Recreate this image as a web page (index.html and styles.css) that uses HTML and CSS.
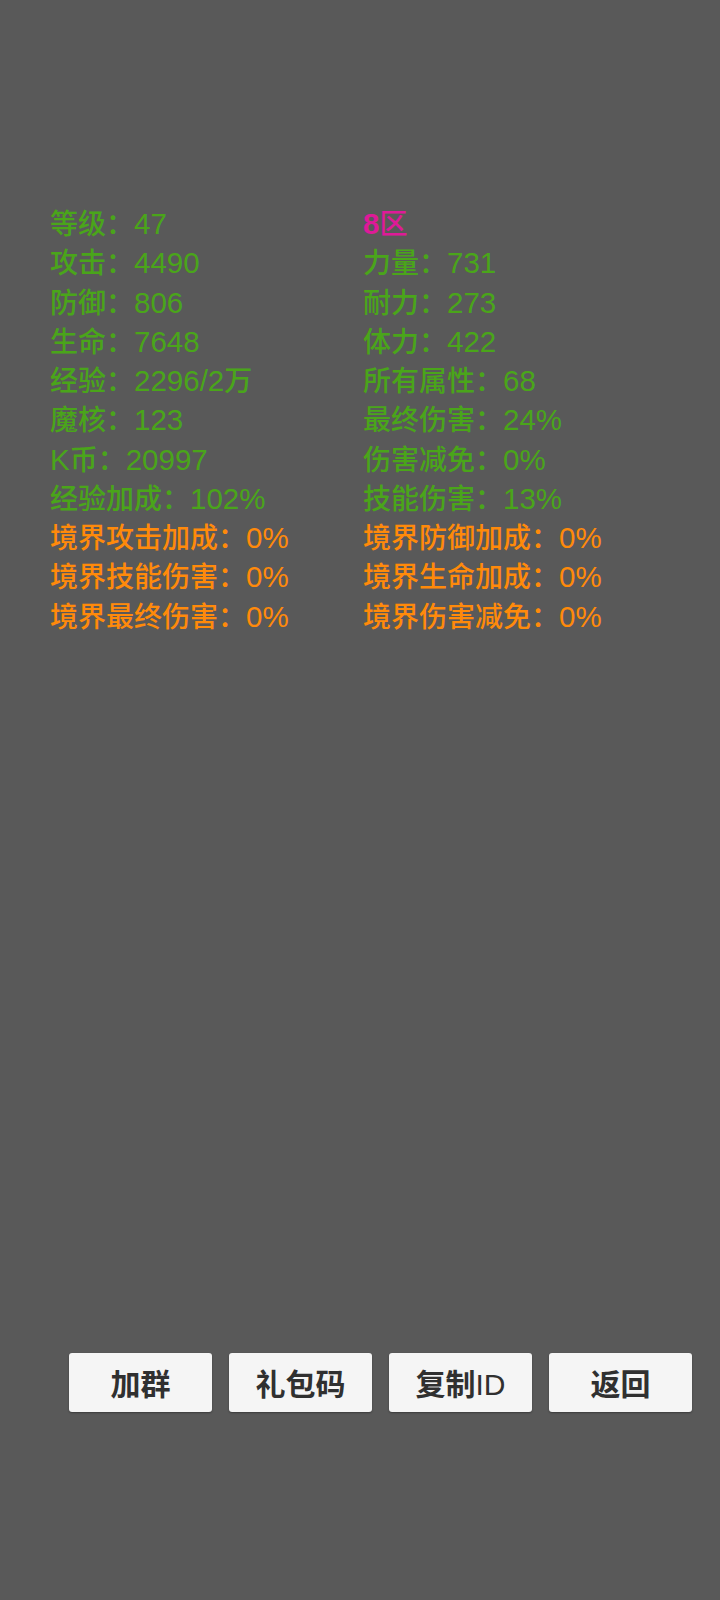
FILE: index.html
```html
<!DOCTYPE html>
<html lang="zh-CN">
<head>
<meta charset="utf-8">
<title>角色属性</title>
<link rel="stylesheet" href="styles.css">
</head>
<body>
<div class="page">
  <div class="stats">
    <div class="stat green"><span class="label">等级：</span><span class="value">47</span></div>
    <div class="stat zone"><span class="value">8</span><span class="label">区</span></div>
    <div class="stat green"><span class="label">攻击：</span><span class="value">4490</span></div>
    <div class="stat green"><span class="label">力量：</span><span class="value">731</span></div>
    <div class="stat green"><span class="label">防御：</span><span class="value">806</span></div>
    <div class="stat green"><span class="label">耐力：</span><span class="value">273</span></div>
    <div class="stat green"><span class="label">生命：</span><span class="value">7648</span></div>
    <div class="stat green"><span class="label">体力：</span><span class="value">422</span></div>
    <div class="stat green"><span class="label">经验：</span><span class="value">2296/2</span><span class="label">万</span></div>
    <div class="stat green"><span class="label">所有属性：</span><span class="value">68</span></div>
    <div class="stat green"><span class="label">魔核：</span><span class="value">123</span></div>
    <div class="stat green"><span class="label">最终伤害：</span><span class="value">24%</span></div>
    <div class="stat green"><span class="value">K</span><span class="label">币：</span><span class="value">20997</span></div>
    <div class="stat green"><span class="label">伤害减免：</span><span class="value">0%</span></div>
    <div class="stat green"><span class="label">经验加成：</span><span class="value">102%</span></div>
    <div class="stat green"><span class="label">技能伤害：</span><span class="value">13%</span></div>
    <div class="stat orange"><span class="label">境界攻击加成：</span><span class="value">0%</span></div>
    <div class="stat orange"><span class="label">境界防御加成：</span><span class="value">0%</span></div>
    <div class="stat orange"><span class="label">境界技能伤害：</span><span class="value">0%</span></div>
    <div class="stat orange"><span class="label">境界生命加成：</span><span class="value">0%</span></div>
    <div class="stat orange"><span class="label">境界最终伤害：</span><span class="value">0%</span></div>
    <div class="stat orange"><span class="label">境界伤害减免：</span><span class="value">0%</span></div>
  </div>
  <div class="actions">
    <button class="btn">加群</button>
    <button class="btn">礼包码</button>
    <button class="btn">复制<span class="btn-latin">ID</span></button>
    <button class="btn">返回</button>
  </div>
</div>
</body>
</html>
```

FILE: styles.css
```css
html, body {
  margin: 0;
  padding: 0;
  background: #595959;
}

.page {
  width: 720px;
  height: 1600px;
  display: flex;
  flex-direction: column;
  font-family: "Noto Sans CJK SC", "Noto Sans", sans-serif;
}

.stats {
  padding-top: 203px;
  padding-left: 50px;
  display: grid;
  grid-template-columns: 313px 1fr;
  grid-auto-rows: 39.25px;
}

.stat {
  font-size: 28px;
  line-height: 39.25px;
  white-space: nowrap;
}

.label {
  font-family: "Noto Sans CJK SC", sans-serif;
  font-size: 28px;
  font-weight: 500;
}

.value {
  font-family: "Liberation Sans", Arial, sans-serif;
  font-size: 29.5px;
}

.green {
  color: #4aa51a;
}

.orange {
  color: #ff8a0a;
}

.zone {
  color: #de1a98;
}

.zone .value {
  font-weight: 700;
}

.actions {
  margin-top: 718px;
  padding-left: 69px;
  display: flex;
  gap: 17px;
}

.btn {
  width: 143px;
  height: 59px;
  margin: 0;
  padding: 0;
  border: none;
  border-radius: 3px;
  background: #f5f5f5;
  box-shadow: 0 1px 2px rgba(0, 0, 0, 0.35);
  color: #303030;
  font-family: "Noto Sans CJK SC", "Noto Sans", sans-serif;
  font-size: 30px;
  font-weight: 700;
  line-height: 59px;
}

.btn-latin {
  font-family: "Liberation Sans", Arial, sans-serif;
  font-weight: 400;
}
```
